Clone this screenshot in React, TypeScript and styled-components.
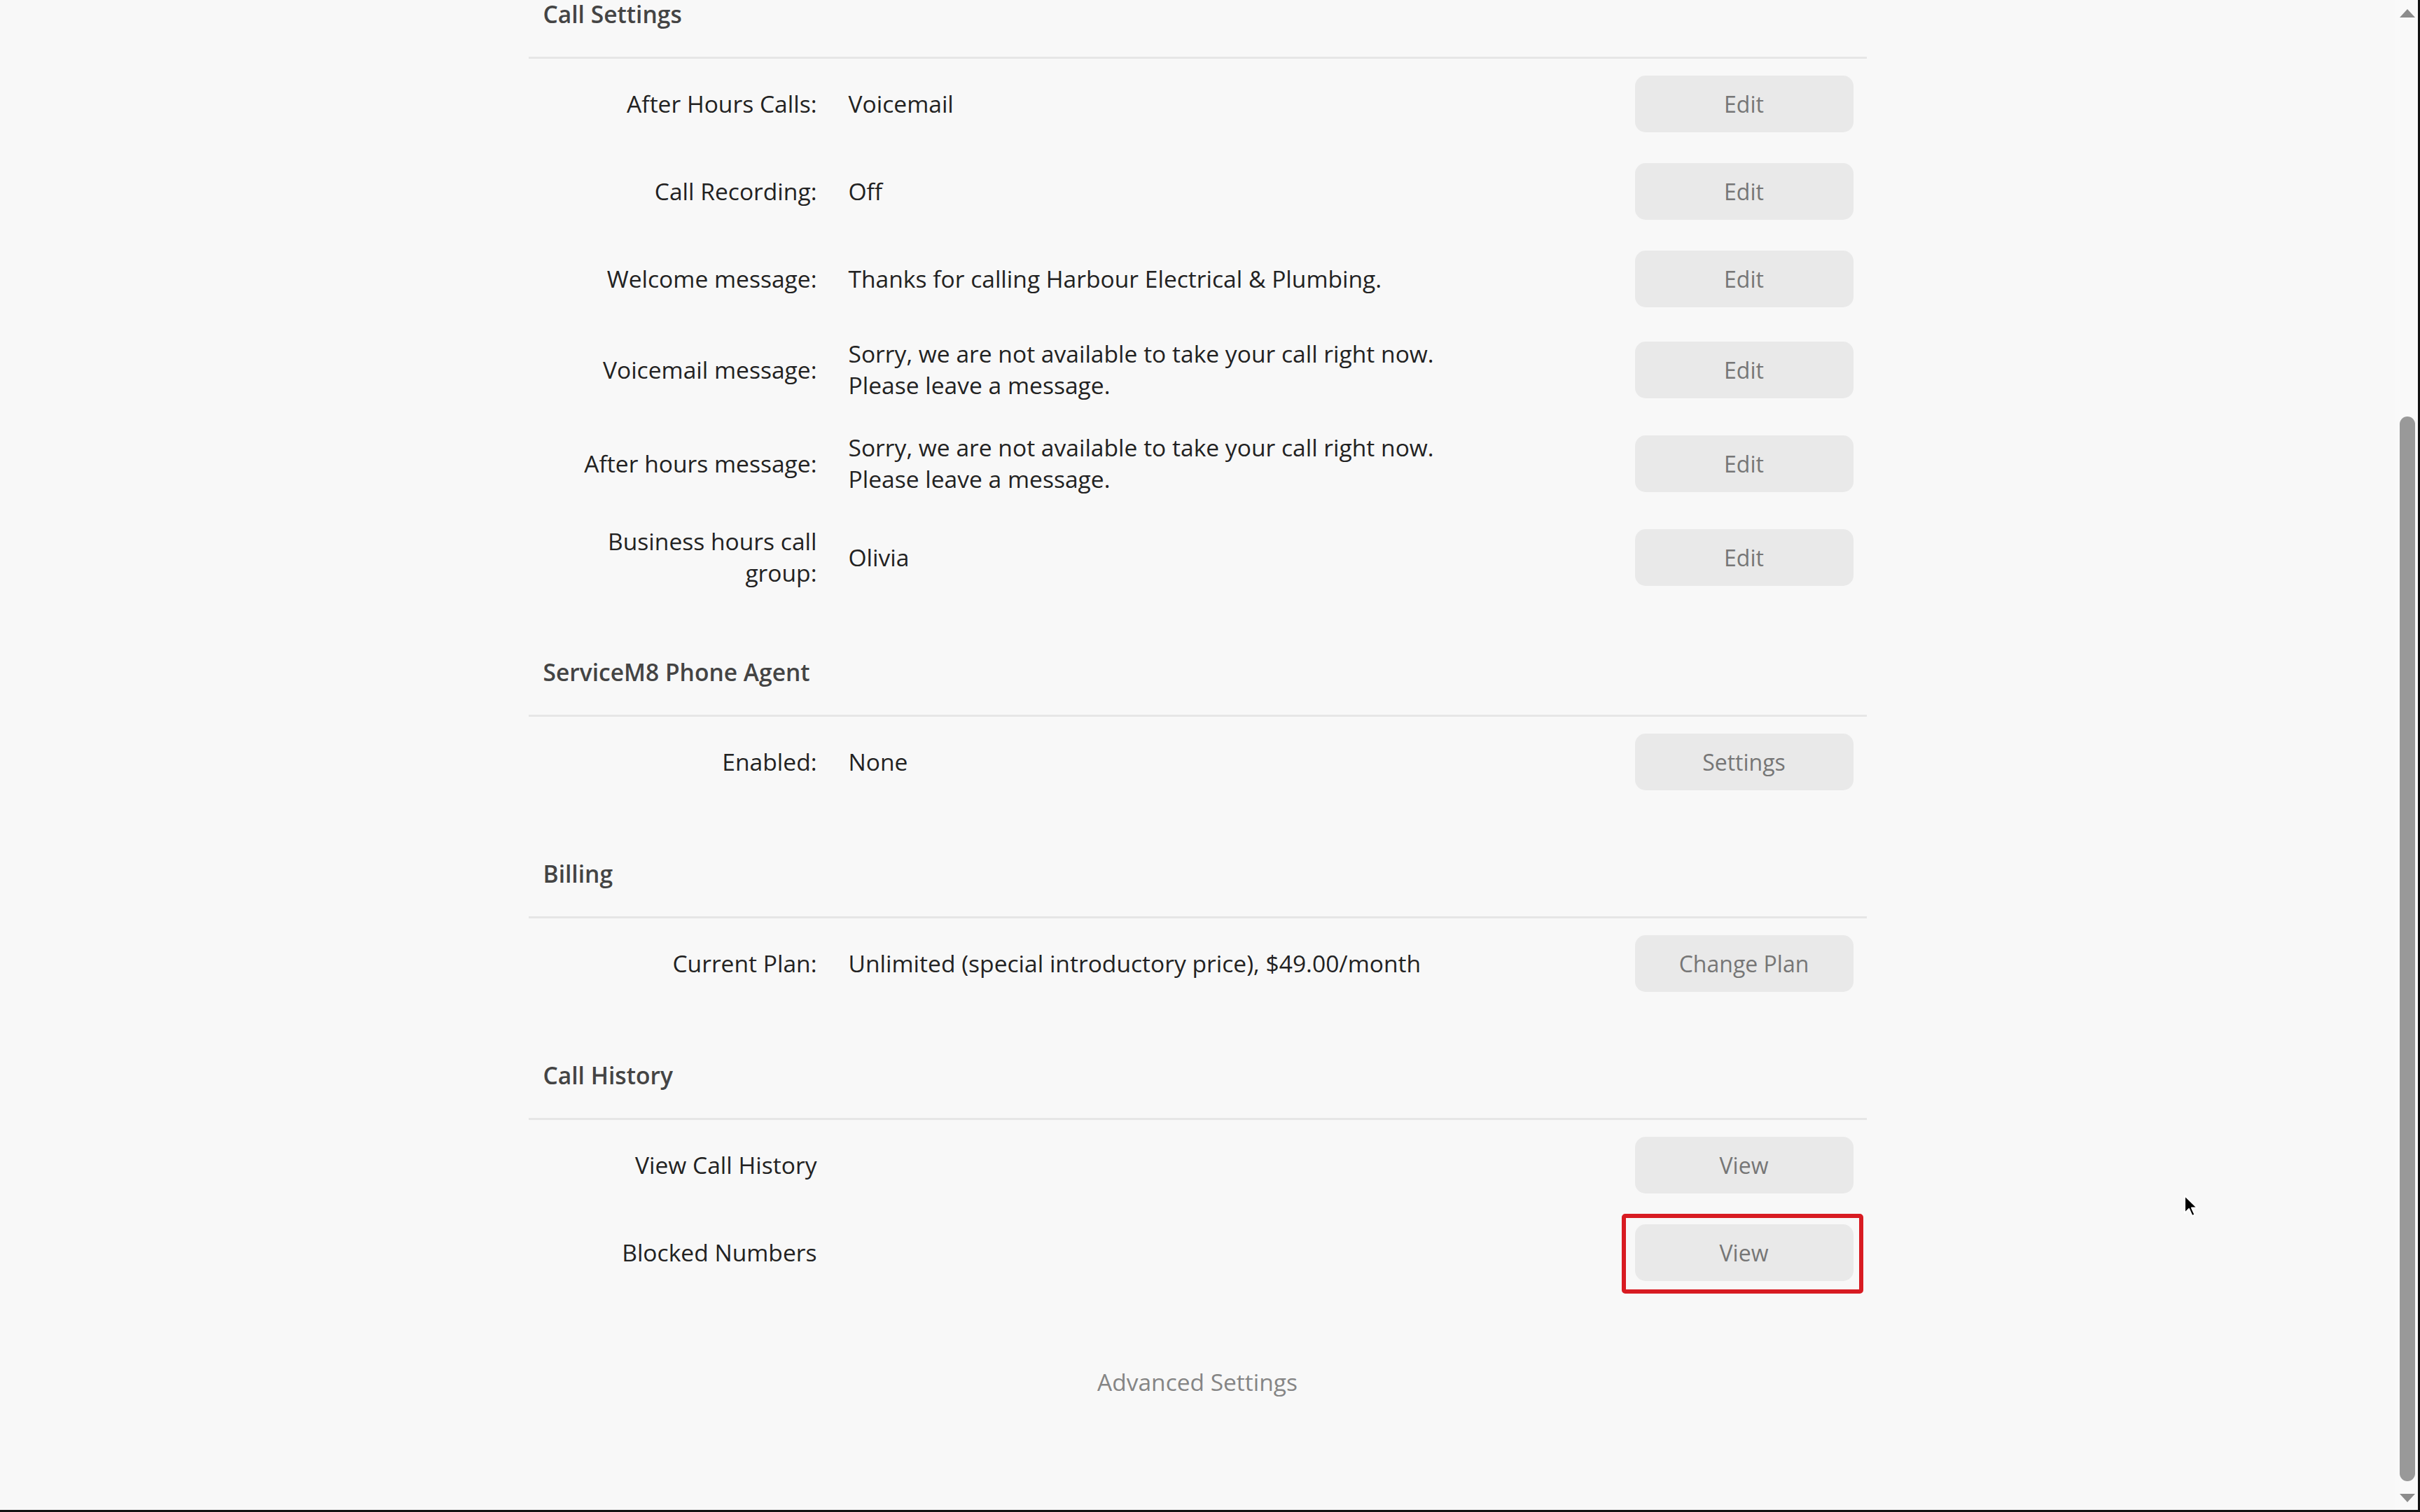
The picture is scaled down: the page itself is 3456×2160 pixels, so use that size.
import React from "react";
import styled, { createGlobalStyle } from "styled-components";

const GlobalStyle = createGlobalStyle`
  html, body {
    margin: 0;
    padding: 0;
    background: #f8f8f8;
  }
  body {
    font-family: "Open Sans", "Noto Sans", "Liberation Sans", sans-serif;
    color: #222;
  }
  * {
    box-sizing: border-box;
  }
`;

const Frame = styled.div`
  position: relative;
  display: flex;
  width: 3456px;
  height: 2160px;
  overflow: hidden;
  background: #f8f8f8;
  border-right: 3px solid #111;
  border-bottom: 3px solid #111;
`;

const Main = styled.main`
  flex: 1;
  min-width: 0;
`;

const Content = styled.div`
  width: 1911px;
  margin: 0 auto;
`;

const Section = styled.section`
  & + & {
    margin-top: 77px;
  }
`;

const SectionTitle = styled.h2`
  margin: 0 0 2px;
  padding: 0 0 41px 21px;
  font-size: 33.6px;
  line-height: 40px;
  font-weight: 600;
  color: #444;
  border-bottom: 3px solid #e6e6e6;
`;

const Row = styled.div`
  display: grid;
  grid-template-columns: 412px 1fr auto;
  align-items: center;
  padding: 22px 19px 22px 0;
`;

const Label = styled.div`
  padding-left: 40px;
  text-align: right;
  font-size: 33.6px;
  line-height: 45px;
  color: #222;
`;

const Value = styled.div`
  padding-left: 45px;
  font-size: 33.6px;
  line-height: 45px;
  color: #222;

  span {
    display: block;
    max-width: 880px;
  }
`;

const ButtonSlot = styled.div<{ $highlight?: boolean }>`
  position: relative;

  ${({ $highlight }) =>
    $highlight &&
    `
    &::after {
      content: "";
      position: absolute;
      top: -15px;
      bottom: -18px;
      left: -19px;
      right: -14px;
      border: 6px solid #d81b22;
      border-radius: 5px;
      pointer-events: none;
    }
  `}
`;

const ActionButton = styled.button`
  display: flex;
  align-items: center;
  justify-content: center;
  width: 312px;
  height: 81px;
  border: none;
  border-radius: 15px;
  background: #e9e9e9;
  color: #767676;
  font-family: inherit;
  font-size: 32px;
  cursor: pointer;
`;

const AdvancedLink = styled.div`
  margin-top: 100px;
  text-align: center;
  font-size: 33.5px;
  line-height: 45px;
  color: #858585;
`;

const ScrollTrack = styled.div`
  display: flex;
  flex-direction: column;
  width: 33px;
  padding-left: 7px;
  background: #f9f9f9;
`;

const Arrow = styled.div<{ $down?: boolean }>`
  width: 0;
  height: 0;
  margin-top: ${({ $down }) => ($down ? "18px" : "13px")};
  border-left: 11px solid transparent;
  border-right: 11px solid transparent;
  ${({ $down }) =>
    $down ? "border-top: 12px solid #8c8c8c;" : "border-bottom: 12px solid #8c8c8c;"}
`;

const Thumb = styled.div`
  width: 22px;
  height: 1521px;
  margin-top: 570px;
  border-radius: 11px;
  background: #999;
`;

const Cursor = styled.svg`
  position: absolute;
  left: 3118px;
  top: 1706px;
  width: 22px;
  height: 34px;
`;

type SettingRow = {
  label: string;
  value?: string[];
  action: string;
  highlight?: boolean;
};

type SettingSection = {
  title: string;
  rows: SettingRow[];
};

const sections: SettingSection[] = [
  {
    title: "Call Settings",
    rows: [
      { label: "After Hours Calls:", value: ["Voicemail"], action: "Edit" },
      { label: "Call Recording:", value: ["Off"], action: "Edit" },
      {
        label: "Welcome message:",
        value: ["Thanks for calling Harbour Electrical & Plumbing."],
        action: "Edit",
      },
      {
        label: "Voicemail message:",
        value: [
          "Sorry, we are not available to take your call right now.",
          "Please leave a message.",
        ],
        action: "Edit",
      },
      {
        label: "After hours message:",
        value: [
          "Sorry, we are not available to take your call right now.",
          "Please leave a message.",
        ],
        action: "Edit",
      },
      { label: "Business hours call group:", value: ["Olivia"], action: "Edit" },
    ],
  },
  {
    title: "ServiceM8 Phone Agent",
    rows: [{ label: "Enabled:", value: ["None"], action: "Settings" }],
  },
  {
    title: "Billing",
    rows: [
      {
        label: "Current Plan:",
        value: ["Unlimited (special introductory price), $49.00/month"],
        action: "Change Plan",
      },
    ],
  },
  {
    title: "Call History",
    rows: [
      { label: "View Call History", action: "View" },
      { label: "Blocked Numbers", action: "View", highlight: true },
    ],
  },
];

export default function App() {
  return (
    <>
      <GlobalStyle />
      <Frame>
        <Main>
          <Content>
            {sections.map((section) => (
              <Section key={section.title}>
                <SectionTitle>{section.title}</SectionTitle>
                {section.rows.map((row) => (
                  <Row key={row.label}>
                    <Label>{row.label}</Label>
                    <Value>
                      {row.value?.map((line) => (
                        <span key={line}>{line}</span>
                      ))}
                    </Value>
                    <ButtonSlot $highlight={row.highlight}>
                      <ActionButton>{row.action}</ActionButton>
                    </ButtonSlot>
                  </Row>
                ))}
              </Section>
            ))}
            <AdvancedLink>Advanced Settings</AdvancedLink>
          </Content>
        </Main>
        <ScrollTrack>
          <Arrow />
          <Thumb />
          <Arrow $down />
        </ScrollTrack>
        <Cursor viewBox="0 0 22 34">
          <path
            d="M2 2 L2 27 L8 21 L12.5 31 L16.5 29.3 L12 19.5 L20 19.5 Z"
            fill="#000"
            stroke="#fff"
            strokeWidth="2"
            strokeLinejoin="round"
          />
        </Cursor>
      </Frame>
    </>
  );
}
